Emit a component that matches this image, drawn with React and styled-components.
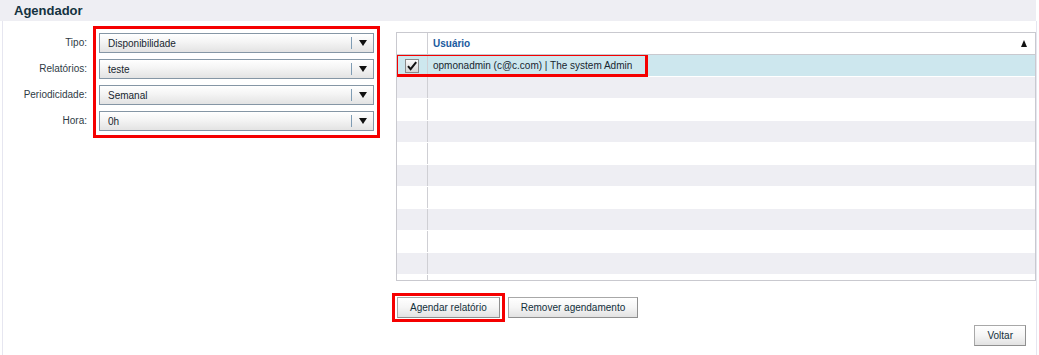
import React from "react";
import styled, { createGlobalStyle } from "styled-components";

const Global = createGlobalStyle`
  html, body { margin: 0; padding: 0; background: #fff; }
  body { font-family: "Liberation Sans", Arial, sans-serif; font-size: 10px; color: #1d2b36; }
  * { box-sizing: border-box; }
`;

const Page = styled.div`
  width: 1039px;
  height: 355px;
  overflow: hidden;
`;

const Header = styled.div`
  width: 1036px;
  height: 21px;
  background: #eeeef3;
  padding: 2px 0 0 14px;
  font-size: 13px;
  font-weight: bold;
  line-height: 18px;
  color: #14323f;
`;

const Panel = styled.div`
  margin-left: 2px;
  width: 1035px;
  height: 334px;
  border-left: 1px solid #e6e6f0;
  border-right: 1px solid #e6e6f0;
  padding-top: 11px;
  display: flex;
  flex-direction: column;
`;

const Main = styled.div`
  display: flex;
  gap: 22px;
`;

const Form = styled.div`
  display: flex;
  gap: 12px;
  padding-top: 1px;
  align-self: flex-start;
`;

const LabelCol = styled.div`
  width: 84px;
  display: flex;
  flex-direction: column;
  gap: 6px;
`;

const Label = styled.div`
  height: 20px;
  line-height: 20px;
  text-align: right;
  color: #2e3b45;
  font-size: 10px;
`;

const Highlight = styled.div`
  position: relative;
  &::after {
    content: "";
    position: absolute;
    top: ${(p) => p.$t}px;
    left: ${(p) => p.$l}px;
    right: ${(p) => p.$r}px;
    bottom: ${(p) => p.$b}px;
    border: 3px solid #f50000;
    pointer-events: none;
  }
`;

const SelectCol = styled.div`
  width: 275px;
  display: flex;
  flex-direction: column;
  gap: 6px;
`;

const Select = styled.div`
  height: 20px;
  border: 1px solid #8596a5;
  background: linear-gradient(#ffffff 0%, #f4f4f4 45%, #e3e3e3 100%);
  display: flex;
  align-items: center;
  padding-left: 8px;
  color: #17262f;
  font-size: 10px;
`;

const SelectText = styled.span`
  flex: 1;
`;

const Divider = styled.span`
  width: 1px;
  height: 12px;
  background: #7f9cb4;
`;

const ArrowBox = styled.span`
  width: 21px;
  display: flex;
  justify-content: center;
  align-items: center;
`;

const DownArrow = styled.span`
  width: 0;
  height: 0;
  border-left: 4px solid transparent;
  border-right: 4px solid transparent;
  border-top: 6px solid #111;
`;

const RightCol = styled.div`
  width: 640px;
  display: flex;
  flex-direction: column;
`;

const Table = styled.div`
  border: 1px solid #c9c9cf;
`;

const HeadRow = styled.div`
  display: flex;
  height: 22px;
  border-bottom: 1px solid #c9c9cf;
  background: #fff;
`;

const CheckCell = styled.div`
  width: 31px;
  border-right: 1px solid #cfcfd4;
  display: flex;
  align-items: center;
  justify-content: center;
  flex-shrink: 0;
`;

const HeadCell = styled.div`
  flex: 1;
  display: flex;
  align-items: center;
  justify-content: space-between;
  padding: 0 8px 0 5px;
  font-weight: bold;
  color: #1a5a9e;
  font-size: 10px;
`;

const UpArrow = styled.span`
  width: 0;
  height: 0;
  border-left: 3px solid transparent;
  border-right: 3px solid transparent;
  border-bottom: 7px solid #111;
`;

const Body = styled.div`
  height: 225px;
  overflow: hidden;
`;

const Row = styled.div`
  position: relative;
  display: flex;
  height: 22px;
  border-bottom: 1px solid #fff;
  background: ${(p) => (p.$selected ? "#cde7ee" : p.$alt ? "#eeeef3" : "#ffffff")};
`;

const RowMark = styled.span`
  position: absolute;
  left: -2px;
  top: -2px;
  width: 253px;
  height: 24px;
  border: 3px solid #f50000;
  pointer-events: none;
`;

const Cell = styled.div`
  flex: 1;
  display: flex;
  align-items: center;
  padding-left: 5px;
  color: #17262f;
  font-size: 10px;
`;

const Box = styled.span`
  width: 14px;
  height: 14px;
  border: 1px solid #8a8a8a;
  background: linear-gradient(#fbfbfb, #d6d6d6);
  display: flex;
  align-items: center;
  justify-content: center;
`;

const Buttons = styled.div`
  display: flex;
  gap: 8px;
  margin-top: 16px;
  padding-left: 1px;
`;

const Button = styled.button`
  height: 21px;
  padding: 0 12px;
  border: 1px solid #8f8f8f;
  border-top-color: #a8a8a8;
  border-left-color: #a8a8a8;
  background: linear-gradient(#ffffff 0%, #f5f5f5 50%, #e2e2e2 100%);
  font-family: "Liberation Sans", Arial, sans-serif;
  font-size: 10px;
  color: #12303b;
  cursor: pointer;
  display: block;
`;

const Footer = styled.div`
  display: flex;
  justify-content: flex-end;
  padding-right: 10px;
  margin-top: 7px;
`;

const fields = [
  ["Tipo:", "Disponibilidade"],
  ["Relatórios:", "teste"],
  ["Periodicidade:", "Semanal"],
  ["Hora:", "0h"],
];

export default function App() {
  const rows = Array.from({ length: 11 }, (_, i) => i);
  return (
    <Page>
      <Global />
      <Header>Agendador</Header>
      <Panel>
        <Main>
          <Form>
            <LabelCol>
              {fields.map(([l]) => (
                <Label key={l}>{l}</Label>
              ))}
            </LabelCol>
            <Highlight $t={-7} $l={-6} $r={-6} $b={-7}>
              <SelectCol>
                {fields.map(([l, v]) => (
                  <Select key={l}>
                    <SelectText>{v}</SelectText>
                    <Divider />
                    <ArrowBox>
                      <DownArrow />
                    </ArrowBox>
                  </Select>
                ))}
              </SelectCol>
            </Highlight>
          </Form>
          <RightCol>
            <Table>
              <HeadRow>
                <CheckCell />
                <HeadCell>
                  <span>Usuário</span>
                  <UpArrow />
                </HeadCell>
              </HeadRow>
              <Body>
                {rows.map((i) => (
                  <Row key={i} $selected={i === 0} $alt={i % 2 === 1}>
                    <CheckCell>
                      {i === 0 && (
                        <Box>
                          <svg width="12" height="12" viewBox="0 0 12 12">
                            <path d="M2 6.2 L4.6 9.2 L10.2 2.2" fill="none" stroke="#111" strokeWidth="2" />
                          </svg>
                        </Box>
                      )}
                    </CheckCell>
                    <Cell>{i === 0 ? "opmonadmin (c@c.com) | The system Admin" : ""}</Cell>
                    {i === 0 && <RowMark />}
                  </Row>
                ))}
              </Body>
            </Table>
            <Buttons>
              <Highlight $t={-4} $l={-5} $r={-5} $b={-4}>
                <Button>Agendar relatório</Button>
              </Highlight>
              <Button>Remover agendamento</Button>
            </Buttons>
          </RightCol>
        </Main>
        <Footer>
          <Button>Voltar</Button>
        </Footer>
      </Panel>
    </Page>
  );
}
